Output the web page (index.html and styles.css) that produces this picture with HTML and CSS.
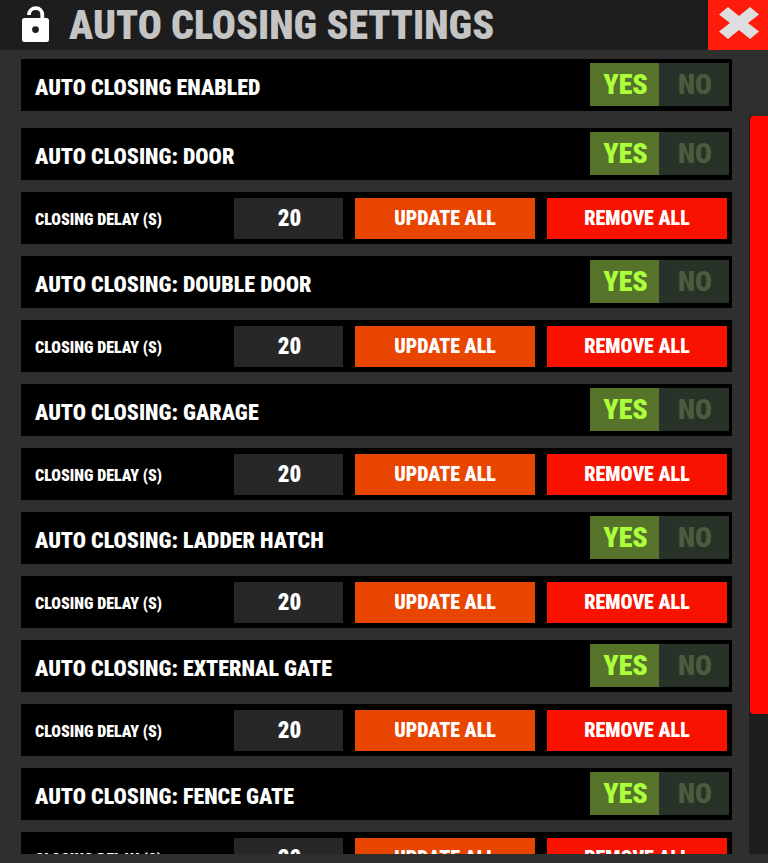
FILE: index.html
```html
<!DOCTYPE html>
<html lang="en">
<head>
    <meta charset="UTF-8">
    <meta name="viewport" content="width=device-width, initial-scale=1.0">
    <title>Auto Closing Settings</title>
    <link rel="stylesheet" href="styles.css">
</head>
<body>
    <header class="header">
        <svg class="lock" viewBox="0 0 28 38" aria-hidden="true">
            <path d="M7 9C7 5 10 2.200 13.800 2.200S20.300 5 20.300 9V14" fill="none" stroke="#fff" stroke-width="3.800"/>
            <path fill="#fff" fill-rule="evenodd" d="M2.500 12h22a2.500 2.500 0 0 1 2.500 2.500v19a2.500 2.500 0 0 1-2.500 2.500h-22a2.500 2.500 0 0 1-2.500-2.500v-19a2.500 2.500 0 0 1 2.500-2.500zM13.500 20.200a3.400 3.400 0 1 0 0 6.800 3.400 3.400 0 0 0 0-6.800z"/>
        </svg>
        <h1 class="title">AUTO CLOSING SETTINGS</h1>
        <button type="button" class="close" aria-label="Close">
            <svg viewBox="0 0 42 34" aria-hidden="true">
                <path fill="#dedede" d="M10 1L21 10 32 1 41 8.500 30 17 41 25.500 32 33 21 24 10 33 1 25.500 12 17 1 8.500z"/>
            </svg>
        </button>
    </header>
    <main class="settings">
        <div class="row row-main">
            <span class="name">AUTO CLOSING ENABLED</span>
            <div class="toggle" role="radiogroup" aria-label="Auto closing enabled">
                <label class="choice"><input type="radio" name="all" checked><span>YES</span></label>
                <label class="choice"><input type="radio" name="all"><span>NO</span></label>
            </div>
        </div>
        <div class="scroll">
            <div class="list" id="list"></div>
            <div class="track"><div class="thumb"></div></div>
        </div>
    </main>

    <script>
        var list=document.getElementById('list');
        var doors=['DOOR','DOUBLE DOOR','GARAGE','LADDER HATCH','EXTERNAL GATE','FENCE GATE'];

        doors.forEach(function(door,i){
            list.innerHTML+=`
            <div class="row">
                <span class="name">AUTO CLOSING: ${door}</span>
                <div class="toggle" role="radiogroup" aria-label="Auto closing: ${door}">
                    <label class="choice"><input type="radio" name="door${i}" checked><span>YES</span></label>
                    <label class="choice"><input type="radio" name="door${i}"><span>NO</span></label>
                </div>
            </div>
            <div class="row row-delay">
                <label class="delay" for="delay${i}">CLOSING DELAY (S)</label>
                <input class="seconds" type="text" id="delay${i}" value="20">
                <button type="button" class="btn update">UPDATE ALL</button>
                <button type="button" class="btn remove">REMOVE ALL</button>
            </div>`;
        });
    </script>
</body>
</html>
```
FILE: styles.css
```css
*{
    box-sizing: border-box;
    font-family: "Roboto Condensed", "Liberation Sans Narrow", Roboto, sans-serif;
    font-weight: 900;
}
body{
    margin: 0;
    height: 100vh;
    overflow: hidden;
    display: flex;
    flex-direction: column;
    background-color: #2f2f2f;
    color: #ffffff;
}
.header{
    display: flex;
    align-items: center;
    height: 50px;
    flex: none;
    padding-left: 22px;
    background-color: #1d1d1d;
}
.lock{
    width: 28px;
    height: 38px;
}
.title{
    flex: 1;
    margin: 0 0 0 19px;
    padding-top: 2px;
    font-size: 40px;
    line-height: 48px;
    color: #c4c4c4;
    white-space: nowrap;
}
.close{
    width: 60px;
    height: 50px;
    padding: 0 0 4px 2px;
    border: none;
    background-color: #ff1c0c;
    cursor: pointer;
}
.close svg{
    display: block;
    width: 42px;
    height: 34px;
    margin: 0 auto;
}
.settings{
    flex: 1;
    min-height: 0;
    display: flex;
    flex-direction: column;
    padding: 9px 0 9px 21px;
}
.row{
    display: flex;
    flex: none;
    height: 52px;
    padding: 4px 3px 5px 14px;
    background-color: #000000;
}
.row-main{
    margin: 0 36px 5px 0;
}
.name{
    flex: 1;
    font-size: 22px;
    line-height: 50px;
    white-space: nowrap;
}
.toggle{
    display: grid;
    grid-template-columns: 69px 70px;
}
.choice{
    cursor: pointer;
}
.choice input{
    position: absolute;
    opacity: 0;
    margin: 0;
}
.choice span{
    display: block;
    height: 43px;
    padding-left: 2px;
    background-color: #283228;
    color: #4e5a3c;
    font-size: 28px;
    line-height: 43px;
    text-align: center;
}
.choice input:checked + span{
    background-color: #56732b;
    color: #adff3c;
}
.scroll{
    flex: 1;
    min-height: 0;
    display: flex;
    gap: 17px;
}
.list{
    flex: 1;
    overflow: hidden;
    display: flex;
    flex-direction: column;
    gap: 12px;
    padding-top: 12px;
}
.row-delay{
    gap: 12px;
    padding: 6px 5px 5px 14px;
}
.delay{
    flex: 1;
    font-size: 16px;
    line-height: 44px;
    white-space: nowrap;
}
.seconds{
    width: 109px;
    padding: 0 0 1px 2px;
    border: none;
    background-color: #272727;
    color: #ffffff;
    font-size: 23px;
    text-align: center;
}
.btn{
    width: 180px;
    padding: 0 0 2px;
    border: none;
    color: #ffffff;
    font-size: 20px;
    cursor: pointer;
}
.update{
    background-color: #e84500;
}
.remove{
    background-color: #f91200;
}
.track{
    width: 19px;
    padding-left: 1px;
    background-color: #1e1e1e;
}
.thumb{
    height: 81%;
    border-radius: 4px 0 0 4px;
    background-color: #ff0800;
}
```
